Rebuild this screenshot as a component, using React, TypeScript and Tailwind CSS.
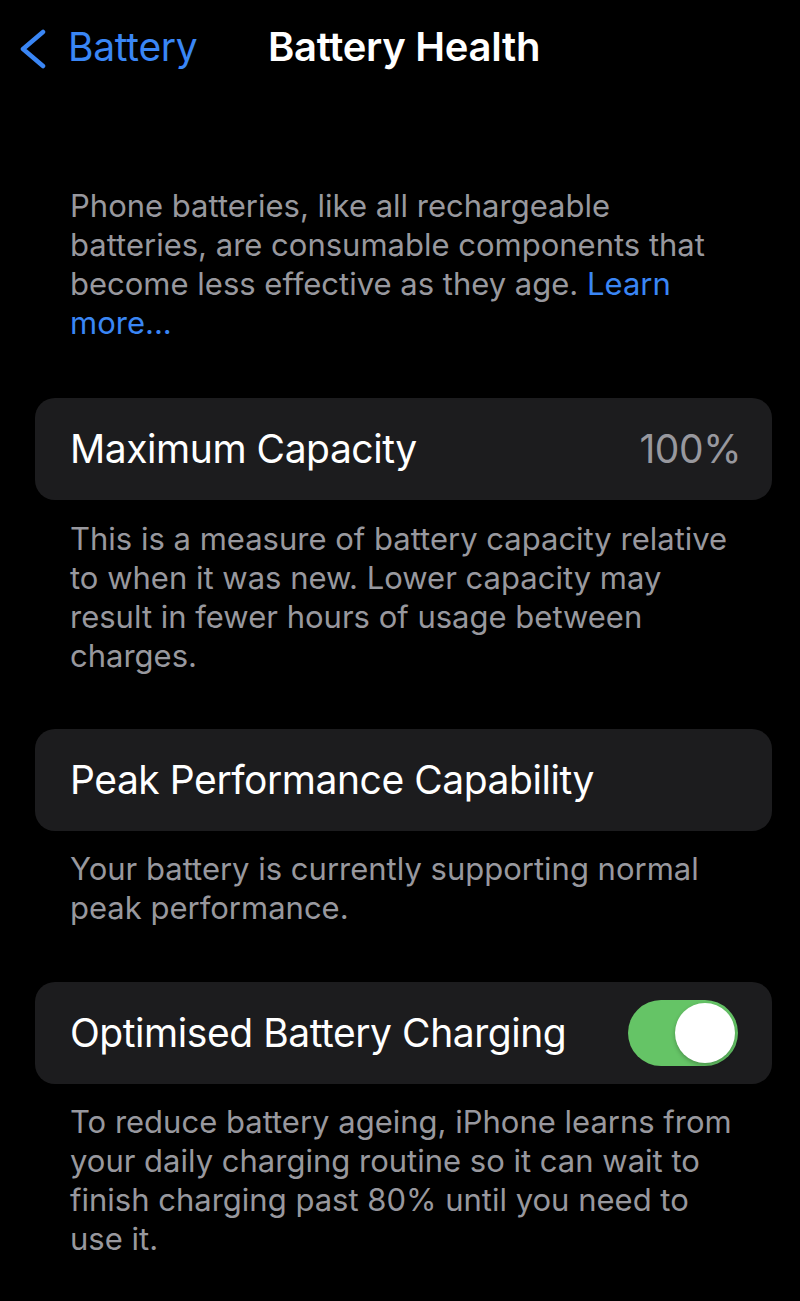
import React from "react";

const font = { fontFamily: "Inter, 'Liberation Sans', sans-serif" };

function Desc({ lines, className = "" }: { lines: React.ReactNode[]; className?: string }) {
  return (
    <div className={`px-[70px] text-[31px] leading-[39px] text-[#98989e] ${className}`}>
      {lines.map((l, i) => (
        <div key={i} className="whitespace-nowrap">
          {l}
        </div>
      ))}
    </div>
  );
}

function Card({ children, className = "" }: { children: React.ReactNode; className?: string }) {
  return (
    <div
      className={`ml-[35px] mr-[28px] h-[102px] rounded-[20px] bg-[#1c1c1e] pl-[35px] pr-[34px] flex items-center justify-between text-[39px] tracking-[-0.45px] ${className}`}
    >
      {children}
    </div>
  );
}

export default function App() {
  return (
    <div className="w-[800px] h-[1301px] bg-black text-white overflow-hidden" style={font}>
      {/* Header */}
      <div className="relative h-[94px] flex items-center">
        <div className="flex items-center pl-[19px] text-[#3a86f5]">
          <svg width="28" height="40" viewBox="0 0 28 40" className="mt-[4px]">
            <path d="M24 3 L4 20 L24 37" fill="none" stroke="#3a86f5" strokeWidth="4.5" strokeLinecap="round" strokeLinejoin="round" />
          </svg>
          <span className="ml-[21px] text-[39px] tracking-[-0.3px]">Battery</span>
        </div>
        <div className="absolute left-[268px] top-0 h-[94px] flex items-center text-[40px] font-semibold tracking-[-0.3px]">
          Battery Health
        </div>
      </div>

      <Desc
        className="mt-[92px]"
        lines={[
          "Phone batteries, like all rechargeable",
          "batteries, are consumable components that",
          <>
            become less effective as they age. <span className="text-[#3a86f5]">Learn</span>
          </>,
          <span className="text-[#3a86f5]">more...</span>,
        ]}
      />

      <Card className="mt-[56px]">
        <span>Maximum Capacity</span>
        <span className="text-[#98989e] -mr-[3px]">100%</span>
      </Card>

      <Desc
        className="mt-[19px]"
        lines={[
          "This is a measure of battery capacity relative",
          "to when it was new. Lower capacity may",
          "result in fewer hours of usage between",
          "charges.",
        ]}
      />

      <Card className="mt-[54px]">
        <span>Peak Performance Capability</span>
      </Card>

      <Desc
        className="mt-[18px]"
        lines={["Your battery is currently supporting normal", "peak performance."]}
      />

      <Card className="mt-[55px]">
        <span>Optimised Battery Charging</span>
        <div className="w-[110px] h-[66px] rounded-full bg-[#65c466] flex items-center justify-end pr-[3px]">
          <div className="w-[60px] h-[60px] rounded-full bg-white shadow-[0_2px_4px_rgba(0,0,0,0.25)]" />
        </div>
      </Card>

      <Desc
        className="mt-[18px]"
        lines={[
          "To reduce battery ageing, iPhone learns from",
          "your daily charging routine so it can wait to",
          "finish charging past 80% until you need to",
          "use it.",
        ]}
      />
    </div>
  );
}
